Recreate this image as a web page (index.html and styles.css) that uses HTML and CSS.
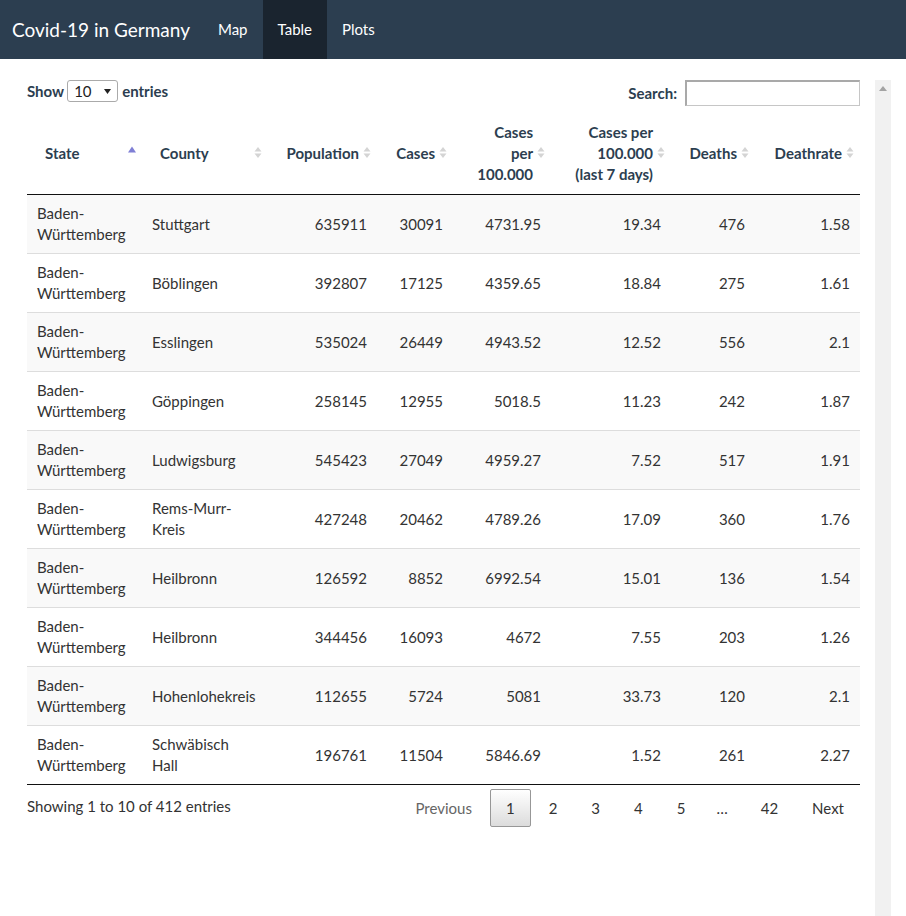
FILE: index.html
```html
<!DOCTYPE html>
<html lang="en">
<head>
<meta charset="utf-8">
<title>Covid-19 in Germany</title>
<link rel="stylesheet" href="styles.css">
</head>
<body>
<nav class="navbar">
  <span class="brand">Covid-19 in Germany</span>
  <ul class="nav">
    <li><a>Map</a></li>
    <li class="active"><a>Table</a></li>
    <li><a>Plots</a></li>
  </ul>
</nav>
<div class="page">
  <main class="content">
    <div class="controls">
      <label class="length">Show <span class="select">10<svg class="caret" width="7" height="5" viewBox="0 0 7 5"><path d="M0 0H7L3.5 5Z" fill="#222"/></svg></span> entries</label>
      <label class="filter">Search: <span class="search-input"></span></label>
    </div>
    <table class="data">
      <colgroup>
        <col style="width:115px"><col style="width:126px"><col style="width:109px"><col style="width:76px"><col style="width:98px"><col style="width:120px"><col style="width:84px"><col style="width:105px">
      </colgroup>
      <thead>
        <tr>
          <th>State<svg class="sort" width="19" height="19" viewBox="0 0 19 19"><path d="M5 9.5H13L9 3.5Z" fill="#7f7fd5"/></svg></th>
          <th>County<svg class="sort" width="19" height="19" viewBox="0 0 19 19"><path d="M5.5 8.5H12.5L9 4Z M5.5 10.5H12.5L9 15Z" fill="#d4d4d4"/></svg></th>
          <th class="num">Population<svg class="sort" width="19" height="19" viewBox="0 0 19 19"><path d="M5.5 8.5H12.5L9 4Z M5.5 10.5H12.5L9 15Z" fill="#d4d4d4"/></svg></th>
          <th class="num">Cases<svg class="sort" width="19" height="19" viewBox="0 0 19 19"><path d="M5.5 8.5H12.5L9 4Z M5.5 10.5H12.5L9 15Z" fill="#d4d4d4"/></svg></th>
          <th class="num">Cases per 100.000<svg class="sort" width="19" height="19" viewBox="0 0 19 19"><path d="M5.5 8.5H12.5L9 4Z M5.5 10.5H12.5L9 15Z" fill="#d4d4d4"/></svg></th>
          <th class="num">Cases per 100.000 (last 7 days)<svg class="sort" width="19" height="19" viewBox="0 0 19 19"><path d="M5.5 8.5H12.5L9 4Z M5.5 10.5H12.5L9 15Z" fill="#d4d4d4"/></svg></th>
          <th class="num">Deaths<svg class="sort" width="19" height="19" viewBox="0 0 19 19"><path d="M5.5 8.5H12.5L9 4Z M5.5 10.5H12.5L9 15Z" fill="#d4d4d4"/></svg></th>
          <th class="num">Deathrate<svg class="sort" width="19" height="19" viewBox="0 0 19 19"><path d="M5.5 8.5H12.5L9 4Z M5.5 10.5H12.5L9 15Z" fill="#d4d4d4"/></svg></th>
        </tr>
      </thead>
      <tbody>
        <tr><td>Baden-Württemberg</td><td>Stuttgart</td><td class="num">635911</td><td class="num">30091</td><td class="num">4731.95</td><td class="num">19.34</td><td class="num">476</td><td class="num">1.58</td></tr>
        <tr><td>Baden-Württemberg</td><td>Böblingen</td><td class="num">392807</td><td class="num">17125</td><td class="num">4359.65</td><td class="num">18.84</td><td class="num">275</td><td class="num">1.61</td></tr>
        <tr><td>Baden-Württemberg</td><td>Esslingen</td><td class="num">535024</td><td class="num">26449</td><td class="num">4943.52</td><td class="num">12.52</td><td class="num">556</td><td class="num">2.1</td></tr>
        <tr><td>Baden-Württemberg</td><td>Göppingen</td><td class="num">258145</td><td class="num">12955</td><td class="num">5018.5</td><td class="num">11.23</td><td class="num">242</td><td class="num">1.87</td></tr>
        <tr><td>Baden-Württemberg</td><td>Ludwigsburg</td><td class="num">545423</td><td class="num">27049</td><td class="num">4959.27</td><td class="num">7.52</td><td class="num">517</td><td class="num">1.91</td></tr>
        <tr><td>Baden-Württemberg</td><td>Rems-Murr-Kreis</td><td class="num">427248</td><td class="num">20462</td><td class="num">4789.26</td><td class="num">17.09</td><td class="num">360</td><td class="num">1.76</td></tr>
        <tr><td>Baden-Württemberg</td><td>Heilbronn</td><td class="num">126592</td><td class="num">8852</td><td class="num">6992.54</td><td class="num">15.01</td><td class="num">136</td><td class="num">1.54</td></tr>
        <tr><td>Baden-Württemberg</td><td>Heilbronn</td><td class="num">344456</td><td class="num">16093</td><td class="num">4672</td><td class="num">7.55</td><td class="num">203</td><td class="num">1.26</td></tr>
        <tr><td>Baden-Württemberg</td><td>Hohenlohekreis</td><td class="num">112655</td><td class="num">5724</td><td class="num">5081</td><td class="num">33.73</td><td class="num">120</td><td class="num">2.1</td></tr>
        <tr><td>Baden-Württemberg</td><td>Schwäbisch Hall</td><td class="num">196761</td><td class="num">11504</td><td class="num">5846.69</td><td class="num">1.52</td><td class="num">261</td><td class="num">2.27</td></tr>
      </tbody>
    </table>
    <div class="footer">
      <div class="info">Showing 1 to 10 of 412 entries</div>
      <div class="paging">
        <a class="pg disabled">Previous</a>
        <a class="pg current">1</a>
        <a class="pg">2</a>
        <a class="pg">3</a>
        <a class="pg">4</a>
        <a class="pg">5</a>
        <span class="ellipsis">…</span>
        <a class="pg">42</a>
        <a class="pg">Next</a>
      </div>
    </div>
  </main>
  <div class="scrollbar"><svg class="sb-arrow" width="8" height="5" viewBox="0 0 8 5"><path d="M0 5H8L4 0Z" fill="#a3a3a3"/></svg></div>
</div>
</body>
</html>
```
FILE: styles.css
```css
* { box-sizing: border-box; }
html, body { margin: 0; padding: 0; background: #fff; }
body {
  font-family: Lato, "Open Sans", "Liberation Sans", sans-serif;
  font-size: 15px;
  line-height: 21px;
  color: #333;
  height: 916px;
  overflow: hidden;
}

.navbar {
  display: flex;
  align-items: stretch;
  height: 59px;
  background: #2c3e50;
}
.brand {
  padding: 0 13px 0 12px;
  font-size: 19px;
  line-height: 59px;
  color: #fff;
}
.nav {
  display: flex;
  list-style: none;
  margin: 0;
  padding: 0;
}
.nav a {
  display: block;
  padding: 0 15px;
  line-height: 59px;
  color: #fff;
}
.nav .active a { background: #1a242f; }

.page {
  display: flex;
  gap: 15px;
  height: 857px;
  padding: 21px 15px 0 27px;
}
.content { flex: 1; min-width: 0; }
.scrollbar {
  width: 16px;
  background: #f1f1f1;
  display: flex;
  justify-content: center;
  padding-top: 6px;
}
.sb-arrow { display: block; }

.controls {
  display: flex;
  justify-content: space-between;
  align-items: flex-start;
  height: 32px;
}
.length, .filter {
  display: flex;
  align-items: center;
  font-weight: bold;
  color: #2c3e50;
}
.length { height: 22px; }
.select {
  display: inline-flex;
  align-items: center;
  justify-content: space-between;
  width: 51px;
  height: 22px;
  margin: 0 4px 0 3px;
  padding: 0 6px 0 6px;
  border: 1px solid #aaa;
  border-radius: 3px;
  font-weight: normal;
  color: #222;
  background: #fff;
}
.caret { display: block; }
.filter { height: 26px; }
.search-input {
  display: inline-block;
  width: 175px;
  height: 26px;
  margin-left: 8px;
  border: 1px solid #c6c6c6;
  border-top: 2px solid #a9a9a9;
  border-left: 2px solid #a9a9a9;
  background: #fff;
}

.data {
  width: 100%;
  table-layout: fixed;
  border-collapse: separate;
  border-spacing: 0;
}
.data th {
  position: relative;
  padding: 10px 18px 9px;
  text-align: left;
  vertical-align: middle;
  font-weight: bold;
  color: #2c3e50;
  border-bottom: 1px solid #111;
}
.data th.num, .data td.num { text-align: right; }
.sort {
  position: absolute;
  right: 0;
  top: 50%;
  margin-top: -10px;
}
.data td {
  padding: 8px 10px;
  vertical-align: middle;
  border-top: 1px solid #ddd;
}
.data tbody tr:first-child td { border-top: none; }
.data tbody tr:nth-child(odd) td { background: #f9f9f9; }
.data tbody tr:last-child td { border-bottom: 1px solid #111; }

.footer {
  display: flex;
  justify-content: space-between;
  align-items: flex-start;
}
.info { padding-top: 11px; color: #333; }
.paging {
  display: flex;
  align-items: center;
  padding-top: 4px;
}
.pg {
  display: inline-block;
  padding: 7.5px 15px;
  margin-left: 2px;
  border: 1px solid transparent;
  border-radius: 2px;
  color: #333;
  min-width: 22px;
  text-align: center;
}
.pg.disabled { color: #666; }
.pg.current {
  border-color: #979797;
  background: linear-gradient(to bottom, #fff 0%, #dcdcdc 100%);
}
.ellipsis { padding: 0 15px; color: #333; }
```
